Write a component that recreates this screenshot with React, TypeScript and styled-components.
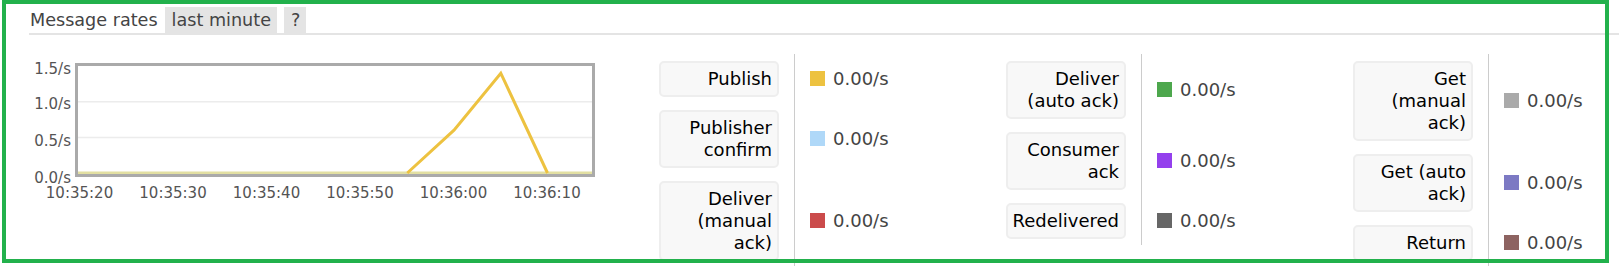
import React from 'react';
import styled, { createGlobalStyle } from 'styled-components';

const GlobalStyle = createGlobalStyle`
	html, body {
		margin: 0;
		padding: 0;
		background: #ffffff;
	}
	body {
		font-family: "DejaVu Sans", Verdana, sans-serif;
		overflow: hidden;
	}
`;

const columns = [
	[
		{ label: 'Publish', color: '#edc240', value: '0.00/s' },
		{ label: 'Publisher confirm', color: '#afd8f8', value: '0.00/s' },
		{ label: 'Deliver (manual ack)', color: '#cb4b4b', value: '0.00/s' },
	],
	[
		{ label: 'Deliver (auto ack)', color: '#4da74d', value: '0.00/s' },
		{ label: 'Consumer ack', color: '#9440ed', value: '0.00/s' },
		{ label: 'Redelivered', color: '#666666', value: '0.00/s' },
	],
	[
		{ label: 'Get (manual ack)', color: '#aaaaaa', value: '0.00/s' },
		{ label: 'Get (auto ack)', color: '#7c79c3', value: '0.00/s' },
		{ label: 'Return', color: '#8d6361', value: '0.00/s' },
	],
];

// chart drawn in page coordinates, the svg viewBox starts at the chart block origin
const yTicks = [
	{ text: '1.5/s', y: 69 },
	{ text: '1.0/s', y: 104 },
	{ text: '0.5/s', y: 140.5 },
	{ text: '0.0/s', y: 177.5 },
];
const xTicks = ['10:35:20', '10:35:30', '10:35:40', '10:35:50', '10:36:00', '10:36:10'];

const RateChart = () => (
	<ChartWrap>
		<svg width={630} height={160} viewBox="29 54 630 160">
			<line x1={78} x2={592} y1={101.7} y2={101.7} stroke="#ececec" strokeWidth={1.5} />
			<line x1={78} x2={592} y1={137.4} y2={137.4} stroke="#ececec" strokeWidth={1.5} />
			<line x1={78} x2={592} y1={173} y2={173} stroke="#e2dfa2" strokeWidth={3} />
			<polyline
				points="407.3,173 454,130.2 500.8,73.2 547.5,173"
				fill="none"
				stroke="#edc240"
				strokeWidth={3}
				strokeLinejoin="miter"
			/>
			<rect x={76.5} y={64.5} width={517} height={111} fill="none" stroke="#aaaaaa" strokeWidth={3} />
			{yTicks.map((t) => (
				<TickText key={t.text} x={71} y={t.y} textAnchor="end" dominantBaseline="central">
					{t.text}
				</TickText>
			))}
			{xTicks.map((t, i) => (
				<TickText key={t} x={79.5 + i * 93.5} y={193} textAnchor="middle" dominantBaseline="central">
					{t}
				</TickText>
			))}
		</svg>
	</ChartWrap>
);

export default function App() {
	return (
		<Page>
			<GlobalStyle />
			<Section>
				<Header>
					<Title>Message rates</Title>
					<Tab>last minute</Tab>
					<Tab>?</Tab>
				</Header>
				<Body>
					<RateChart />
					{columns.map((col, i) => (
						<Legend key={i}>
							{col.map((row) => (
								<React.Fragment key={row.label}>
									<LabelCell>
										<LabelBox>{row.label}</LabelBox>
									</LabelCell>
									<ValueCell>
										<Swatch color={row.color} />
										<Value>{row.value}</Value>
									</ValueCell>
								</React.Fragment>
							))}
						</Legend>
					))}
				</Body>
			</Section>
			<Frame />
		</Page>
	);
}

const Page = styled.div`
	position: relative;
	width: 1619px;
	height: 266px;
	overflow: hidden;
	background: #ffffff;
`;

const Section = styled.div`
	padding-left: 29px;
`;

const Header = styled.div`
	display: flex;
	align-items: flex-end;
	padding-top: 7px;
	border-bottom: 2px solid #e4e4e4;
	font-size: 17.6px;
	color: #444444;
`;

const Title = styled.span`
	line-height: 26px;
	padding-left: 1px;
`;

const Tab = styled.span`
	line-height: 26px;
	padding: 0 6px 0 7px;
	margin-left: 7px;
	background: #e4e4e4;
	color: #444444;
`;

const Body = styled.div`
	display: flex;
	align-items: flex-start;
	margin-top: 19px;
`;

const ChartWrap = styled.div`
	width: 630px;
	flex: none;

	svg {
		display: block;
	}
`;

const TickText = styled.text`
	font-family: "DejaVu Sans", Verdana, sans-serif;
	font-size: 15px;
	fill: #545454;
`;

const Legend = styled.div`
	flex: none;
	width: 347px;
	display: grid;
	grid-template-columns: 135px 1fr;
	font-size: 18px;
`;

const LabelCell = styled.div`
	padding: 6.5px 15px 6.5px 0;
`;

const LabelBox = styled.div`
	box-sizing: border-box;
	width: 120px;
	padding: 5.5px 5px 4.5px 0;
	background: #f8f8f8;
	border: 2px solid #eeeeee;
	border-radius: 5px;
	text-align: right;
	line-height: 22px;
	color: #000000;
`;

const ValueCell = styled.div`
	display: flex;
	align-items: center;
	gap: 8px;
	padding-left: 15px;
	border-left: 1px solid #cccccc;
`;

const Swatch = styled.span`
	width: 15px;
	height: 15px;
	flex: none;
	background: ${(props) => props.color};
`;

const Value = styled.span`
	color: #444444;
	line-height: 22px;
`;

const Frame = styled.div`
	position: absolute;
	left: 2px;
	top: 0;
	width: 1607px;
	height: 263px;
	box-sizing: border-box;
	border: 4px solid #22b14c;
	pointer-events: none;
`;
